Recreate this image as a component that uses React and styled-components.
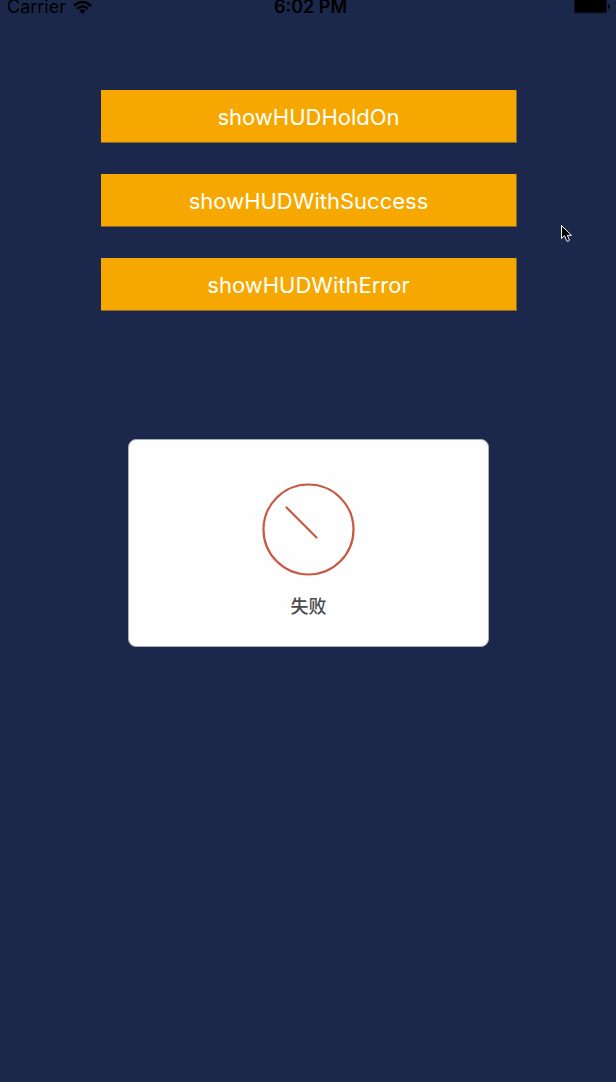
import React from "react";
import styled, { createGlobalStyle } from "styled-components";

const GlobalStyle = createGlobalStyle`
  *, *::before, *::after { box-sizing: border-box; }
  body {
    margin: 0;
    background: #1b284b;
    font-family: Inter, "Noto Sans CJK SC", sans-serif;
  }
`;

const Screen = styled.div`
  position: relative;
  min-height: 100vh;
`;

const StatusBar = styled.header`
  display: grid;
  grid-template-columns: 1fr auto 1fr;
  align-items: center;
  height: 14px;
  padding: 0 6px 0 7px;
  color: #000;
  font-size: 18px;
  line-height: 14px;
`;

const Carrier = styled.div`
  display: flex;
  align-items: center;
  gap: 7px;
`;

const Clock = styled.time`
  padding-left: 4px;
  font-weight: 600;
`;

const BatterySlot = styled.div`
  display: flex;
  justify-content: flex-end;
`;

const Actions = styled.main`
  display: flex;
  flex-direction: column;
  gap: 31px;
  width: 68%;
  margin: 76px auto 0;
  padding-left: 2px;
`;

const ActionButton = styled.button`
  height: 53px;
  padding: 2px 0 0;
  border: solid #8a6826;
  border-width: 0 1px 1px 0;
  background: #f7a800;
  color: #fff;
  font-family: inherit;
  font-size: 22px;
  line-height: 28px;
`;

const HudLayer = styled.div`
  position: absolute;
  inset: 0;
  display: flex;
  align-items: center;
  justify-content: center;
  padding: 4px 0 0 1px;
  pointer-events: none;
`;

const Hud = styled.section`
  display: flex;
  flex-direction: column;
  align-items: center;
  gap: 16px;
  width: 361px;
  padding: 43px 24px 24px;
  border: 1px solid #a9adb7;
  border-radius: 8px;
  background: #fefefe;
`;

const HudMessage = styled.p`
  margin: 0;
  color: #4a4a4a;
  font-size: 18px;
  font-weight: 500;
  line-height: 30px;
`;

const Pointer = styled.svg`
  position: absolute;
  left: 560px;
  top: 224px;
`;

const WifiIcon = () => (
  <svg width="19" height="13" viewBox="0 0 19 13" aria-hidden="true">
    <path d="M1 4.7Q9.5-2.9 18 4.7" fill="none" stroke="#000" strokeWidth="2.5" />
    <path d="M4 7.8Q9.5 2.9 15 7.8" fill="none" stroke="#000" strokeWidth="2.3" />
    <path d="M6.2 9.7Q9.5 6.9 12.8 9.7L9.5 13Z" />
  </svg>
);

const BatteryIcon = () => (
  <svg width="36" height="14" viewBox="0 0 36 14" aria-hidden="true">
    <path d="M0 0H33V11.5Q33 13.5 31 13.5H2Q0 13.5 0 11.5Z" fill="#071020" />
    <path d="M1 0H32V12H1Z" />
    <path d="M34 4Q36 4.5 36 6.5T34 9Z" />
  </svg>
);

const ErrorIcon = () => (
  <svg width="93" height="93" viewBox="0 0 93 93" fill="none" stroke="#c85a45" aria-hidden="true">
    <circle cx="46.5" cy="46.5" r="45" strokeWidth="2.2" />
    <path d="M24.5 24.5L54.5 54.5" strokeWidth="2.2" strokeLinecap="round" />
  </svg>
);

const actions = ["showHUDHoldOn", "showHUDWithSuccess", "showHUDWithError"];

export default function App() {
  return (
    <Screen>
      <GlobalStyle />
      <StatusBar>
        <Carrier>
          Carrier
          <WifiIcon />
        </Carrier>
        <Clock>6:02 PM</Clock>
        <BatterySlot>
          <BatteryIcon />
        </BatterySlot>
      </StatusBar>
      <Actions>
        {actions.map((name) => (
          <ActionButton key={name} type="button">{name}</ActionButton>
        ))}
      </Actions>
      <HudLayer>
        <Hud role="alert">
          <ErrorIcon />
          <HudMessage lang="zh-CN">失败</HudMessage>
        </Hud>
      </HudLayer>
      <Pointer width="13" height="19" viewBox="0 0 13 19" aria-hidden="true">
        <path
          d="M1.5 1.5V14.5L4.5 11.7L6.8 17Q8 18 9.5 16.3L7.4 11.3H11.5Z"
          fill="#000"
          stroke="#fff"
          strokeWidth="1"
        />
      </Pointer>
    </Screen>
  );
}
